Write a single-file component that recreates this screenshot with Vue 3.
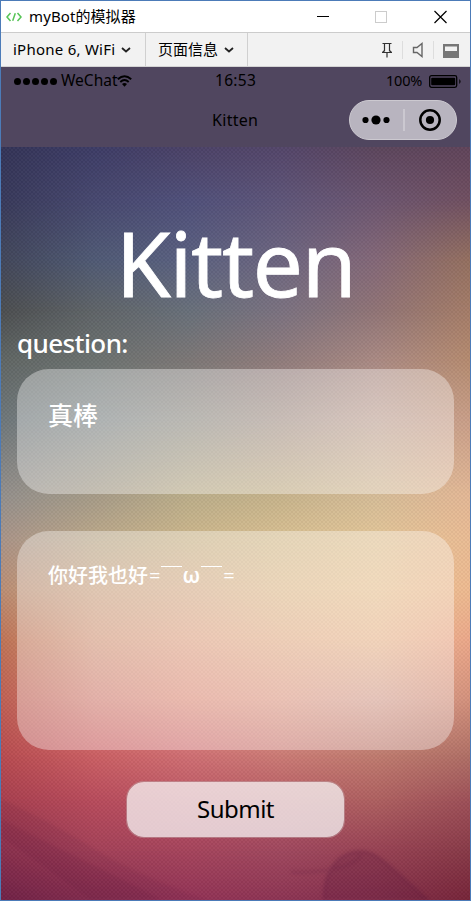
<script setup>
const rows = [
  { y: 0, c: ['#343457', '#3d3c66', '#4c4267', '#54466a', '#5c465c', '#60445a'] },
  { y: 53, c: ['#38395a', '#47486f', '#50507a', '#5e5578', '#6c5570', '#704f60'] },
  { y: 113, c: ['#42475a', '#505a75', '#5a6080', '#6e6680', '#846878', '#94705f'] },
  { y: 163, c: ['#4c4e50', '#5f6468', '#68707a', '#7b7280', '#907476', '#a57c68'] },
  { y: 213, c: ['#606664', '#6c7270', '#7c7776', '#917c7c', '#aa8a84', '#b58b70'] },
  { y: 273, c: ['#6f777a', '#82898a', '#95928a', '#aa988e', '#c2a698', '#ca9f88'] },
  { y: 350, c: ['#95908c', '#a79c88', '#bcae8a', '#c8b48c', '#d6bd98', '#e4b896'] },
  { y: 393, c: ['#aa9488', '#bca98a', '#cdb68c', '#d9c092', '#e3c698', '#eabc94'] },
  { y: 443, c: ['#bb8e74', '#cfa888', '#dab290', '#e2c094', '#ebc698', '#eeba90'] },
  { y: 493, c: ['#c07456', '#d69c80', '#e2a98c', '#e6b490', '#ebbb94', '#eca88a'] },
  { y: 553, c: ['#c06054', '#d48478', '#e09482', '#e0a08c', '#d8a494', '#d4917c'] },
  { y: 608, c: ['#b84c50', '#cc6064', '#d07074', '#cc7c76', '#c07c70', '#b07066'] },
  { y: 653, c: ['#a83f4f', '#b84c5c', '#bc5664', '#b65c64', '#ae6060', '#9e5058'] },
  { y: 703, c: ['#903450', '#a44158', '#a6445c', '#a0485e', '#984254', '#883a48'] },
  { y: 753, c: ['#742448', '#862e50', '#923356', '#8c3453', '#84304c', '#762438'] }
]
const bands = rows.map((r, i) => {
  const mask = i ? `linear-gradient(transparent ${rows[i - 1].y}px, #000 ${r.y}px)` : 'none'
  return { background: `linear-gradient(90deg, ${r.c.join(', ')})`, maskImage: mask }
})
</script>

<template>
  <div class="window">
    <header class="titlebar">
      <svg class="code" width="16" height="10" viewBox="0 0 16 10"><path d="M4.500 1 1 5l3.500 4M11.500 1 15 5l-3.500 4M9.300 1.200 6.700 8.800" /></svg>
      <span class="title">myBot的模拟器</span>
      <svg class="controls" width="130" height="14" viewBox="0 0 130 14" shape-rendering="crispEdges">
        <path d="M0 6.500h12" stroke="#000" /><rect x="58.500" y="1.500" width="11" height="11" stroke="#ccc" />
        <path d="m117.500 1 12 12m0-12-12 12" stroke="#000" stroke-width="1.200" shape-rendering="auto" />
      </svg>
    </header>
    <nav class="toolbar">
      <div class="item device"><span>iPhone 6, WiFi</span><svg width="10" height="6" viewBox="0 0 10 6"><path d="m1 1 4 3.500L9 1" /></svg></div>
      <div class="item info"><span>页面信息</span><svg width="10" height="6" viewBox="0 0 10 6"><path d="m1 1 4 3.500L9 1" /></svg></div>
      <div class="tools">
        <svg width="12" height="16" viewBox="0 0 12 16"><path d="M1.500 1.500h9M3.500 1.500v8M8.500 1.500v8M1.500 10.500 3.500 8.500M10.500 10.500l-2-2M1 10.500h10M6 11v4.500" stroke="#333" stroke-width="1.200" /></svg>
        <i></i>
        <svg width="12" height="16" viewBox="0 0 12 16"><path d="M1.500 5.500v5H5l5 4V1.500l-5 4z" stroke="#666" stroke-width="1.400" /></svg>
        <i></i>
        <svg class="panel" width="16" height="14" viewBox="0 0 16 14"><path d="M0 0h16v14H0z" fill="#777" /><path d="M2 2.500h12V7H2z" fill="#f2f2f2" /></svg>
      </div>
    </nav>
    <section class="phonebar">
      <div class="status">
        <div class="signal"><b v-for="n in 5" :key="n"></b></div>
        <span class="carrier">WeChat</span>
        <svg class="wifi" width="15" height="12" viewBox="0 0 15 12"><path d="M.8 4.200Q7.500-1.800 14.200 4.200M3.300 6.900q4.200-3.700 8.400 0" /><path class="dot" d="M5 9q2.500-2 5 0l-2.500 2.700z" /></svg>
        <span class="time">16:53</span>
        <span class="percent">100%</span>
        <svg class="battery" width="33" height="13" viewBox="0 0 33 13"><rect x=".7" y=".7" width="27" height="11.600" rx="1.800" /><rect class="fill" x="2.200" y="2.700" width="24" height="7.600" rx="1" /><path class="fill" d="M30.300 4q2.500 2.500 0 5z" /></svg>
      </div>
      <div class="nav">
        <span class="page">Kitten</span>
        <div class="capsule">
          <svg width="28" height="10" viewBox="0 0 28 10"><circle cx="3.500" cy="5" r="3.100" /><circle cx="14" cy="5" r="4.600" /><circle cx="24.500" cy="5" r="3.100" /></svg>
          <i></i>
          <svg width="22" height="22" viewBox="0 0 22 22"><circle cx="11" cy="11" r="9.700" fill="none" stroke="#000" stroke-width="2.500" /><circle cx="11" cy="11" r="4.100" /></svg>
        </div>
      </div>
    </section>
    <main class="screen">
      <div class="backdrop">
        <div v-for="(band, i) in bands" :key="i" class="band" :style="band"></div>
        <svg class="shapes" width="469" height="753" viewBox="0 0 469 753">
          <path d="M0 652Q55 678 95 703T205 753H0z" opacity=".09" />
          <path d="M0 672Q55 700 100 722T160 753H90Q45 720 0 690z" opacity=".11" />
          <path d="M323 753C322 720 340 704 360 704C378 704 392 724 428 753z" opacity=".2" />
          <path class="line" d="M290 725C315 726 352 722 360 708M323 753C322 720 340 704 360 704C378 704 392 724 428 753" opacity=".12" />
        </svg>
        <div class="texture"></div>
      </div>
      <div class="content">
        <h1>Kitten</h1>
        <label>question:</label>
        <div class="card ask">真棒</div>
        <div class="card reply"><span>你好我也好<s>=</s></span><em></em><span class="omega">ω</span><em></em><span>=</span></div>
        <button>Submit</button>
      </div>
    </main>
  </div>
</template>

<style>
body { margin: 0; }
</style>
<style scoped>
* { box-sizing: border-box; }
.window { width: 471px; height: 901px; display: flex; flex-direction: column; border: 1px solid #4c7bb8; background: #fff; font-family: "Noto Sans", "Noto Sans CJK SC", sans-serif; color: #000; }
svg { flex: none; fill: none; }
.titlebar { height: 32px; flex: none; display: flex; align-items: center; border-bottom: 1px solid #ccc; padding: 0 23px 0 5px; }
.code path { stroke: #56c456; stroke-width: 1.500; }
.title { margin: -2px 0 0 7px; font-size: 15px; letter-spacing: .1px; white-space: nowrap; }
.controls { margin-left: auto; }
.toolbar { height: 34px; flex: none; display: flex; background: #f2f2f2; border-bottom: 1px solid #d4d4d4; font-size: 15px; white-space: nowrap; }
.item { display: flex; align-items: center; gap: 6px; border-right: 1px solid #d0d0d0; padding-left: 12px; }
.item span { margin-top: -2px; }
.item path { stroke: #222; stroke-width: 1.800; }
.device { width: 145px; letter-spacing: .25px; }
.info { width: 102px; gap: 6px; }
.tools { margin-left: auto; padding-right: 11px; display: flex; align-items: center; gap: 9px; }
.tools i { width: 1px; height: 18px; background: #ddd; }
.panel { margin-top: 2px; }
.phonebar { height: 80px; flex: none; background: #50465f; }
.status { height: 28px; padding: 0 8px 0 13px; display: grid; grid-template-columns: 47px 56px 98px 171px 43px 33px; align-items: center; font-size: 15px; }
.status span { margin-top: -2px; }
.signal { display: flex; gap: 2px; }
.signal b { width: 7px; height: 7px; border-radius: 50%; background: #000; }
.carrier { font-size: 15.500px; }
.wifi path { stroke: #000; stroke-width: 2; }
.wifi .dot, .battery .fill { fill: #000; stroke: none; }
.battery rect { stroke: #000; stroke-width: 1.300; }
.time { font-size: 15.500px; letter-spacing: .3px; }
.percent { font-size: 14.500px; letter-spacing: -.2px; }
.nav { height: 52px; display: grid; grid-template-columns: 348px 108px; align-items: center; padding-bottom: 2px; }
.page { padding-left: 211px; font-size: 16px; letter-spacing: .3px; }
.capsule { height: 40px; border-radius: 20px; background: #b8b4bf; border: 1px solid #ccc9d0; display: flex; align-items: center; padding: 0 15px 0 12px; justify-content: space-between; }
.capsule svg { fill: #000; }
.capsule i { width: 2px; height: 22px; background: #cbc8d0; margin-right: 2px; }
.screen { flex: 1; min-height: 0; display: grid; overflow: hidden; }
.backdrop, .content { grid-area: 1 / 1; min-width: 0; min-height: 0; }
.backdrop { display: grid; isolation: isolate; }
.backdrop > * { grid-area: 1 / 1; }
.shapes, .texture { z-index: 1; }
.shapes { filter: blur(1.500px); }
.shapes path { fill: #501038; }
.shapes .line { fill: none; stroke: #501038; stroke-width: 4; }
.texture { background: repeating-conic-gradient(rgba(0, 0, 0, .035) 0 25%, rgba(255, 255, 255, .025) 0 50%) 0 0 / 4px 4px; }
.content { position: relative; display: flex; flex-direction: column; padding: 55px 16px 0; color: #fff; }
h1 { margin: 0; height: 124px; text-align: center; font-size: 89px; line-height: 122px; font-weight: 400; letter-spacing: -1.300px; -webkit-text-stroke: .8px #fff; }
label { height: 43px; line-height: 34px; font-size: 26px; font-weight: 500; letter-spacing: -.6px; }
.card { border-radius: 32px; background: rgba(255, 255, 255, .36); padding: 26px 31px; flex: none; }
.ask { height: 125px; font-size: 25px; line-height: 41px; font-weight: 500; }
.reply { height: 219px; margin-top: 37px; font-size: 20px; line-height: 37px; display: flex; }
.reply > span:first-child { font-weight: 500; }
.reply s { font-weight: 400; text-decoration: none; margin-left: 1px; }
.reply em { width: 21px; height: 1px; background: #fff; margin: 9px 0 0 1px; }
.reply em + span:last-child { margin-left: 1px; }
.reply .omega { font-size: 21px; font-weight: 600; }
button { align-self: center; margin-top: 31px; width: 219px; height: 57px; border: 1px solid rgba(190, 150, 155, .6); border-radius: 18px; background: rgba(248, 248, 248, .74); background-clip: padding-box; font: 400 24px/50px "Noto Sans", sans-serif; letter-spacing: -.5px; color: #000; padding: 0 0 2px; }
</style>
